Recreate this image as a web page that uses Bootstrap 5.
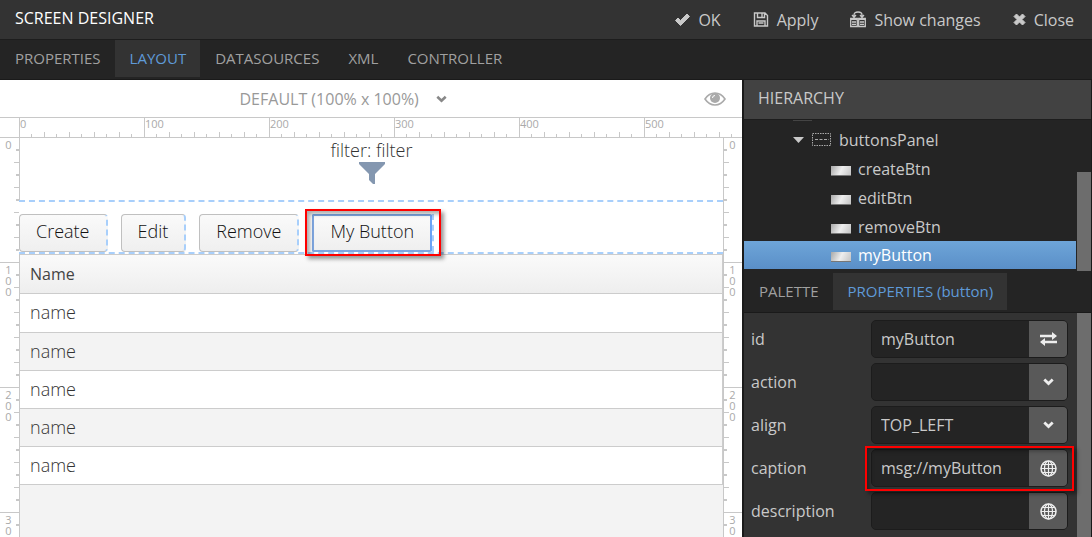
<!DOCTYPE html>
<html lang="en">
<head>
<meta charset="utf-8">
<meta name="viewport" content="width=device-width, initial-scale=1">
<title>Screen Designer</title>
<link href="https://cdn.jsdelivr.net/npm/bootstrap@5.3.0/dist/css/bootstrap.min.css" rel="stylesheet">
<style>
  body { font: 16px/24px "Open Sans", sans-serif; color: #c9c9c9; background: #242424; }
  svg { display: block; flex: none; }
  .topbar { height: 40px; background: #333; border-bottom: 1px solid #1d1d1d; padding: 0 18px 0 15px; }
  .topbar h1 { font-size: 16px; line-height: 24px; color: #fff; }
  .tool { background: none; border: 0; padding: 0; color: #c9c9c9; display: flex; align-items: center; gap: 8px; }
  .tabbar { background: #242424; border-bottom: 1px solid #1a1a1a; height: 40px; padding-bottom: 2px; }
  .tabbar a { display: flex; align-items: center; padding: 0 14px 2px 15px; color: #a0a0a0; text-decoration: none; font-size: 15px; }
  .tabbar a.active { background: #333; color: #5f9ad8; }

  /* canvas */
  .stage { background: #fff; min-width: 0; }
  .sizebar { height: 37px; color: #999; padding-right: 16px; display: grid; grid-template-columns: 1fr auto 1fr; align-items: center; }
  .sizebar select { appearance: none; background: none; border: 0; color: #999; padding: 0; font-size: 16px; line-height: 24px; }
  .sizepick { margin-right: 40px; }
  .hruler { height: 21px; padding-left: 19px; border: solid #c8c8c8; border-width: 1px 0; overflow: hidden; }
  .hscale { height: 19px; width: 100%;
    background:
      linear-gradient(90deg, #c8c8c8 1px, transparent 1px) 0 0 / 125px 19px repeat-x,
      linear-gradient(90deg, #c8c8c8 1px, transparent 1px) 0 100% / 25px 5px repeat-x,
      linear-gradient(90deg, #c8c8c8 1px, transparent 1px) 12px 100% / 25px 3px repeat-x; }
  .hscale span { flex: 0 0 125px; padding-left: 1px; }
  .hscale, .vruler { font-size: 11px; line-height: 12px; color: #aaa; }
  .vruler { width: 19px; flex: none; overflow: hidden; text-align: center; line-height: 11px; }
  .vruler span { display: block; height: 125px; padding: 1px 1px 0 0; width: 18px; }
  .vruler i { display: block; font-style: normal; }
  .vleft { border-right: 1px solid #c8c8c8; width: 20px;
    background:
      linear-gradient(#c8c8c8 1px, transparent 1px) 0 -1px / 19px 125px repeat-y,
      linear-gradient(#c8c8c8 1px, transparent 1px) 100% -1px / 5px 25px repeat-y,
      linear-gradient(#c8c8c8 2px, transparent 2px) 100% 11px / 3px 25px repeat-y; }
  .vright { border-left: 1px solid #c8c8c8;
    background:
      linear-gradient(#c8c8c8 1px, transparent 1px) 0 -1px / 19px 125px repeat-y,
      linear-gradient(#c8c8c8 1px, transparent 1px) 0 -1px / 5px 25px repeat-y,
      linear-gradient(#c8c8c8 2px, transparent 2px) 0 11px / 3px 25px repeat-y; }
  .design { background: #f3f3f3; color: #333; font-weight: 300; font-size: 18px; min-width: 0; }
  .filterbox { background: #fff; height: 62px; }
  .btnpanel { background: #fff; border: dashed #a8cffb; border-width: 2px 0; height: 54px; padding-top: 12px; margin-left: -1px; gap: 13px; }
  .dbtn { height: 38px; padding: 0 16px 5px; background: linear-gradient(#fafafa, #efefef); border: 1px solid #c0c0c0; border-right: 2px dashed #a8cffb; border-radius: 4px; color: #111; font-weight: 300; font-size: 18px; line-height: 30px; }
  .dbtn.sel { border: 2px solid #7ea6e0; border-right-color: #6aa3f5; border-radius: 2px; }
  .selwrap { border-right: 2px dashed #a8cffb; }
  .mark-box { position: absolute; border: 2px solid #f00; box-shadow: 3px 3px 4px #0006, inset 3px 3px 4px #0005; pointer-events: none; }
  .data { width: 100%; background: #fff; border: solid #ccc; border-width: 1px 1px 0 0; border-collapse: separate; border-spacing: 0; }
  .data td, .data th { height: 38px; padding: 0 10px 2px; border-bottom: 1px solid #ccc; }
  .data th { height: 39px; padding-bottom: 0; font-size: 16px; font-weight: 400; color: #444; background: linear-gradient(#fafafa, #eee); }
  .data tbody tr:first-child td { height: 39px; }
  .data tr:nth-child(even) td { background: #f3f3f3; }

  /* side panel */
  .side { width: 350px; flex: none; border: solid #1a1a1a; border-width: 0 1px 0 2px; }
  .side h2 { font-size: 16px; line-height: 24px; height: 40px; padding: 6px 14px; background: #424242; border-bottom: 1px solid #1d1d1d; }
  .tree { height: 151px; margin-bottom: 2px; overflow: hidden; }
  .tree ul { padding-top: 5px; background: linear-gradient(#444, #444) 49px 0 / 19px 1px no-repeat; }
  .tree li { height: 29px; padding-left: 87px; display: flex; align-items: center; gap: 7px; }
  .tree li.parent { padding-left: 49px; gap: 8px; }
  .tree li.selected { background: linear-gradient(#6ea5d8, #5a8fc8); color: #fff; height: 28px; margin-right: 1px; }
  .chip { width: 20px; height: 10px; background: linear-gradient(115deg, #a8a8a8, #eee 50%, #c4c4c4); border-bottom: 1px solid #777; margin-top: 4px; }
  .bar { width: 14px; flex: none; background: #6d6d6d; }
  .tree .bar { margin-top: 52px; }
  .props { background: #333; min-height: 0; overflow: hidden; }
  .props form { padding: 7px 9px 0 7px; display: grid; gap: 5px; }
  .field { display: grid; grid-template-columns: 120px 1fr; }
  .field label { line-height: 24px; padding-top: 7px; }
  .box { height: 38px; border: 1px solid #1c1c1c; border-radius: 5px; background: #242424; overflow: hidden; }
  .box input, .box select { appearance: none; min-width: 0; flex: 1; width: 0; border: 0; background: #242424; color: #c9c9c9; padding: 0 9px; font-size: 16px; }
  .box button, .box .arrow { width: 38px; flex: none; border: 0; padding: 0; background: #595959; color: #eee; display: flex; align-items: center; justify-content: center; }
</style>
</head>
<body class="vh-100 d-flex flex-column overflow-hidden">
<header class="topbar d-flex align-items-center flex-shrink-0">
  <h1 class="mb-1 me-auto">SCREEN DESIGNER</h1>
  <div class="d-flex" style="gap:32px">
    <button class="tool" type="button"><svg width="16" height="14" viewBox="0 0 16 14"><path d="M1.500 7.500 4 5l2.500 2.500L13 1l2.500 2.500L6.500 12.500Z" fill="currentColor" stroke="currentColor" stroke-linejoin="round"/></svg>OK</button>
    <button class="tool" type="button"><svg width="16" height="15" viewBox="0 0 15 15" fill="none" stroke="currentColor" stroke-width="1.400"><path d="M1 1h10.500L14 3.500V14H1ZM4 1v4.500h7V1M3.500 14V9h8v5M5 11h5"/><path d="M8.500 1v4"/></svg>Apply</button>
    <button class="tool" type="button"><svg width="16" height="17" viewBox="0 0 16 17" fill="none" stroke="currentColor" stroke-width="1.300"><path d="M.7 7.500h6.600v8H.7Zm8 0h6.600v8H8.700ZM.7 8.300h6.600m1.400 0h6.600M2 11h4m-4 2.300h4M10 11h4m-4 2.300h4M4 6V4q0-3 4-3t4 3v2M2 4l2 2.200L6 4m4 0 2 2.200L14 4"/></svg>Show changes</button>
    <button class="tool" type="button"><svg width="13" height="13" viewBox="0 0 13 13"><path d="M1 3.500 3.500 1l3 3 3-3L12 3.500l-3 3 3 3L9.500 12l-3-3-3 3L1 9.500l3-3Z" fill="currentColor" stroke="currentColor" stroke-linejoin="round"/></svg>Close</button>
  </div>
</header>
<nav class="tabbar d-flex flex-shrink-0">
  <a href="#">PROPERTIES</a><a href="#" class="active">LAYOUT</a><a href="#">DATASOURCES</a><a href="#">XML</a><a href="#">CONTROLLER</a>
</nav>
<main class="d-flex flex-grow-1" style="min-height:0">
  <section class="stage flex-grow-1 d-flex flex-column">
    <div class="sizebar flex-shrink-0">
      <span></span>
      <div class="sizepick d-flex align-items-center gap-3">
        <select aria-label="Canvas size"><option>DEFAULT (100% x 100%)</option></select>
        <svg width="11" height="8" viewBox="0 0 11 8"><path d="m1.300 1.800 4.200 4 4.200-4" fill="none" stroke="#888" stroke-width="2.600"/></svg>
      </div>
      <svg class="ms-auto" width="22" height="14" viewBox="0 0 22 14"><path d="M1 7q4-6 10-6t10 6q-4 6-10 6T1 7Z" fill="none" stroke="#aaa" stroke-width="1.600"/><circle cx="11" cy="6" r="5" fill="#aaa"/><path d="M8.500 6q0-2.500 2.500-2.500" fill="none" stroke="#fff"/></svg>
    </div>
    <div class="hruler flex-shrink-0"><div class="hscale d-flex"><span>0</span><span>100</span><span>200</span><span>300</span><span>400</span><span>500</span></div></div>
    <div class="d-flex flex-grow-1" style="min-height:0">
      <div class="vruler vleft"><span>0</span><span><i>1</i><i>0</i><i>0</i></span><span><i>2</i><i>0</i><i>0</i></span><span><i>3</i><i>0</i><i>0</i></span></div>
      <div class="design flex-grow-1">
        <div class="filterbox d-flex flex-column align-items-center">
          <span>filter: filter</span>
          <svg width="26" height="22" viewBox="0 0 26 22"><path d="M0 0h26v2L16 12v10h-2l-4-4v-6L0 2Z" fill="#8497b0"/></svg>
        </div>
        <div class="btnpanel d-flex align-items-start">
          <button class="dbtn" type="button">Create</button>
          <button class="dbtn" type="button">Edit</button>
          <button class="dbtn" type="button">Remove</button>
          <div class="selwrap position-relative">
            <button class="dbtn sel" type="button">My Button</button>
            <div class="mark-box" style="inset:-5px -9px -4px -7px"></div>
          </div>
        </div>
        <table class="data">
          <thead><tr><th>Name</th></tr></thead>
          <tbody><tr><td>name</td></tr><tr><td>name</td></tr><tr><td>name</td></tr><tr><td>name</td></tr><tr><td>name</td></tr></tbody>
        </table>
      </div>
      <div class="vruler vright"><span>0</span><span><i>1</i><i>0</i><i>0</i></span><span><i>2</i><i>0</i><i>0</i></span><span><i>3</i><i>0</i><i>0</i></span></div>
    </div>
  </section>
  <aside class="side d-flex flex-column">
    <h2 class="m-0 flex-shrink-0">HIERARCHY</h2>
    <div class="tree d-flex flex-shrink-0">
      <ul class="list-unstyled m-0 flex-grow-1">
        <li class="parent"><svg width="11" height="6" viewBox="0 0 11 6"><path d="M0 0h11L5.500 6Z" fill="#c9c9c9"/></svg><svg width="19" height="13" viewBox="0 0 19 13" fill="none" stroke="#aaa"><path d="M.5.5h18v12H.5Z" stroke-dasharray="1.500 1"/><path d="M3 6.500h14" stroke-dasharray="3 1.500"/></svg>buttonsPanel</li>
        <li><span class="chip"></span>createBtn</li>
        <li><span class="chip"></span>editBtn</li>
        <li><span class="chip"></span>removeBtn</li>
        <li class="selected"><span class="chip"></span>myButton</li>
      </ul>
      <div class="bar"></div>
    </div>
    <nav class="tabbar d-flex flex-shrink-0"><a href="#">PALETTE</a><a href="#" class="active">PROPERTIES (button)</a></nav>
    <div class="props d-flex flex-grow-1">
      <form class="flex-grow-1 align-content-start">
        <div class="field"><label for="f-id">id</label><div class="box d-flex"><input id="f-id" value="myButton"><button type="button" aria-label="Generate id"><svg width="17" height="14" viewBox="0 0 17 14"><path d="M0 2.700h12V0l5 4-5 4V5.300H0ZM17 8.700H5V6L0 10l5 4v-2.700h12Z" fill="currentColor"/></svg></button></div></div>
        <div class="field"><label for="f-action">action</label><div class="box d-flex"><select id="f-action"><option></option></select><span class="arrow"><svg width="11" height="8" viewBox="0 0 11 8"><path d="m1.300 1.500 4.200 4 4.200-4" fill="none" stroke="currentColor" stroke-width="2.800"/></svg></span></div></div>
        <div class="field"><label for="f-align">align</label><div class="box d-flex"><select id="f-align"><option>TOP_LEFT</option></select><span class="arrow"><svg width="11" height="8" viewBox="0 0 11 8"><path d="m1.300 1.500 4.200 4 4.200-4" fill="none" stroke="currentColor" stroke-width="2.800"/></svg></span></div></div>
        <div class="field"><label for="f-caption">caption</label><div class="position-relative"><div class="box d-flex"><input id="f-caption" value="msg://myButton"><button type="button" aria-label="Localize caption"><svg width="17" height="17" viewBox="0 0 17 17" fill="none" stroke="currentColor" stroke-width="1.200"><circle cx="8.500" cy="8.500" r="7.500" stroke-width="1.500"/><ellipse cx="8.500" cy="8.500" rx="4" ry="7.500"/><path d="M8.500 1v15M1 8.500h15M2.500 4.500h12m-12 8h12"/></svg></button></div><div class="mark-box" style="inset:-3px -6px -4px -6px"></div></div></div>
        <div class="field"><label for="f-desc">description</label><div class="box d-flex"><input id="f-desc"><button type="button" aria-label="Localize description"><svg width="17" height="17" viewBox="0 0 17 17" fill="none" stroke="currentColor" stroke-width="1.200"><circle cx="8.500" cy="8.500" r="7.500" stroke-width="1.500"/><ellipse cx="8.500" cy="8.500" rx="4" ry="7.500"/><path d="M8.500 1v15M1 8.500h15M2.500 4.500h12m-12 8h12"/></svg></button></div></div>
      </form>
      <div class="bar"></div>
    </div>
  </aside>
</main>
<script src="https://cdn.jsdelivr.net/npm/bootstrap@5.3.0/dist/js/bootstrap.bundle.min.js"></script>
</body>
</html>
